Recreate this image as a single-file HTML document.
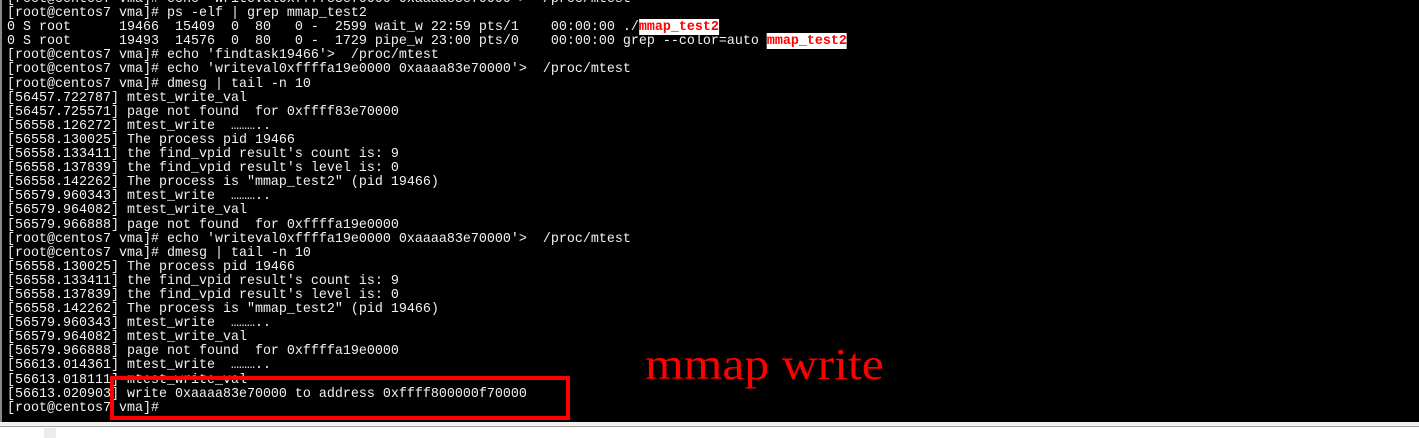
<!DOCTYPE html>
<html><head><style>
html,body{margin:0;padding:0;background:#fff;width:1419px;height:438px;overflow:hidden;position:relative}
#term{position:absolute;left:0;top:0;width:1419px;height:422px;background:#000;border-left:2px solid #888;box-sizing:border-box}
#strip{position:absolute;left:0;top:422px;width:1419px;height:4px;background:#f0f0f0}
#line{position:absolute;left:0;top:426px;width:1419px;height:1px;background:#a0a0a0}
#sq{position:absolute;left:44px;top:428px;width:12px;height:10px;background:#ececec}
pre{position:absolute;left:7px;top:-8px;margin:0;color:#f2f2f2;font-family:"Liberation Mono",monospace;font-size:14px;line-height:14.1px;transform:scaleX(0.952);transform-origin:0 0;white-space:pre}
.h{background:#fff;color:#f00;font-weight:bold}
#mw{position:absolute;left:645px;top:341px;color:#f00;font-family:"Liberation Serif",serif;font-size:44px;line-height:48px;transform:scaleX(1.13);transform-origin:0 0}
#box{position:absolute;left:110px;top:376px;width:460px;height:44px;border:4px solid #f00;box-sizing:border-box}
</style></head><body>
<div id="term"></div>
<div id="strip"></div><div id="line"></div><div id="sq"></div>
<pre>[root@centos7 vma]# echo 'writeval0xffff83e70000 0xaaaa83e70000'>  /proc/mtest
[root@centos7 vma]# ps -elf | grep mmap_test2
0 S root      19466  15409  0  80   0 -  2599 wait_w 22:59 pts/1    00:00:00 ./<span class="h">mmap_test2</span>
0 S root      19493  14576  0  80   0 -  1729 pipe_w 23:00 pts/0    00:00:00 grep --color=auto <span class="h">mmap_test2</span>
[root@centos7 vma]# echo 'findtask19466'>  /proc/mtest
[root@centos7 vma]# echo 'writeval0xffffa19e0000 0xaaaa83e70000'>  /proc/mtest
[root@centos7 vma]# dmesg | tail -n 10
[56457.722787] mtest_write_val
[56457.725571] page not found  for 0xffff83e70000
[56558.126272] mtest_write  ………..
[56558.130025] The process pid 19466
[56558.133411] the find_vpid result's count is: 9
[56558.137839] the find_vpid result's level is: 0
[56558.142262] The process is "mmap_test2" (pid 19466)
[56579.960343] mtest_write  ………..
[56579.964082] mtest_write_val
[56579.966888] page not found  for 0xffffa19e0000
[root@centos7 vma]# echo 'writeval0xffffa19e0000 0xaaaa83e70000'>  /proc/mtest
[root@centos7 vma]# dmesg | tail -n 10
[56558.130025] The process pid 19466
[56558.133411] the find_vpid result's count is: 9
[56558.137839] the find_vpid result's level is: 0
[56558.142262] The process is "mmap_test2" (pid 19466)
[56579.960343] mtest_write  ………..
[56579.964082] mtest_write_val
[56579.966888] page not found  for 0xffffa19e0000
[56613.014361] mtest_write  ………..
[56613.018111] mtest_write_val
[56613.020903] write 0xaaaa83e70000 to address 0xffff800000f70000
[root@centos7 vma]#</pre>
<div id="mw">mmap write</div>
<div id="box"></div>
</body></html>
